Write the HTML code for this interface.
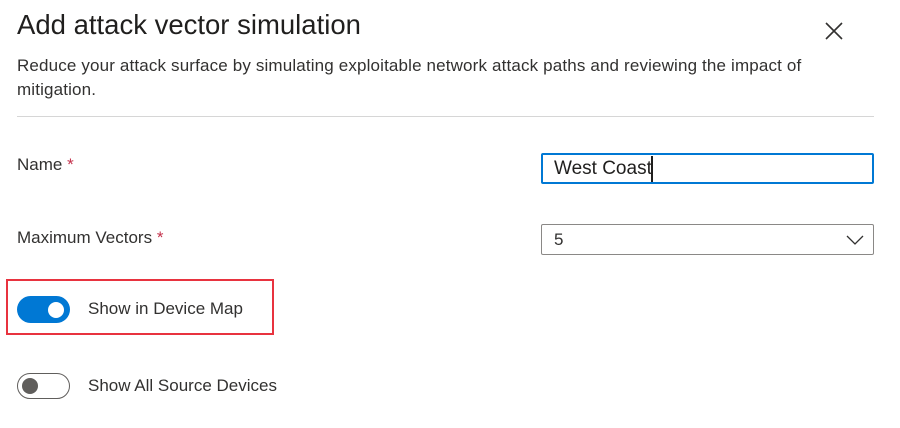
<!DOCTYPE html>
<html><head><style>
body{margin:0;width:900px;height:428px;background:#fff;font-family:"Liberation Sans",sans-serif;color:#323130;position:relative;overflow:hidden}
div,span{position:absolute}
.t{white-space:nowrap}
</style></head><body>
<div class="t" style="left:17px;top:9px;font-size:27.5px;color:#201f1e;">Add attack vector simulation</div>
<svg style="position:absolute;left:824px;top:21px" width="20" height="20"><path d="M2 2L18 18M18 2L2 18" stroke="#323130" stroke-width="1.6"/></svg>
<div style="left:17px;top:54px;width:800px;font-size:17px;line-height:24px;letter-spacing:0.15px">Reduce your attack surface by simulating exploitable network attack paths and reviewing the impact of mitigation.</div>
<div style="left:17px;top:116px;width:857px;height:1px;background:#d6d6d6"></div>
<div class="t" style="left:17px;top:155px;font-size:17px;">Name <span style="position:static;color:#c4314b">*</span></div>
<div style="left:541px;top:153px;width:329px;height:27px;border:2px solid #0078d4;border-radius:2px"></div>
<div class="t" style="left:554px;top:158px;font-size:19px;color:#201f1e">West Coast</div>
<div style="left:651px;top:156px;width:2px;height:26px;background:#201f1e"></div>
<div class="t" style="left:17px;top:228px;font-size:17px;">Maximum Vectors <span style="position:static;color:#c4314b">*</span></div>
<div style="left:541px;top:224px;width:331px;height:29px;border:1px solid #8a8886;border-radius:2px"></div>
<div class="t" style="left:554px;top:230px;font-size:17px">5</div>
<svg style="position:absolute;left:846px;top:235px" width="18" height="10"><path d="M1 1L9 9L17 1" stroke="#323130" stroke-width="1.3" fill="none"/></svg>
<div style="left:6px;top:279px;width:264px;height:52px;border:2px solid #e8333f"></div>
<div style="left:17px;top:296px;width:53px;height:27px;border-radius:14px;background:#0078d4"></div>
<div style="left:48px;top:302px;width:16px;height:16px;border-radius:50%;background:#fff"></div>
<div class="t" style="left:88px;top:299px;font-size:17px">Show in Device Map</div>
<div style="left:17px;top:373px;width:51px;height:24px;border-radius:14px;border:1px solid #605e5c"></div>
<div style="left:22px;top:378px;width:16px;height:16px;border-radius:50%;background:#605e5c"></div>
<div class="t" style="left:88px;top:376px;font-size:17px">Show All Source Devices</div>
</body></html>
